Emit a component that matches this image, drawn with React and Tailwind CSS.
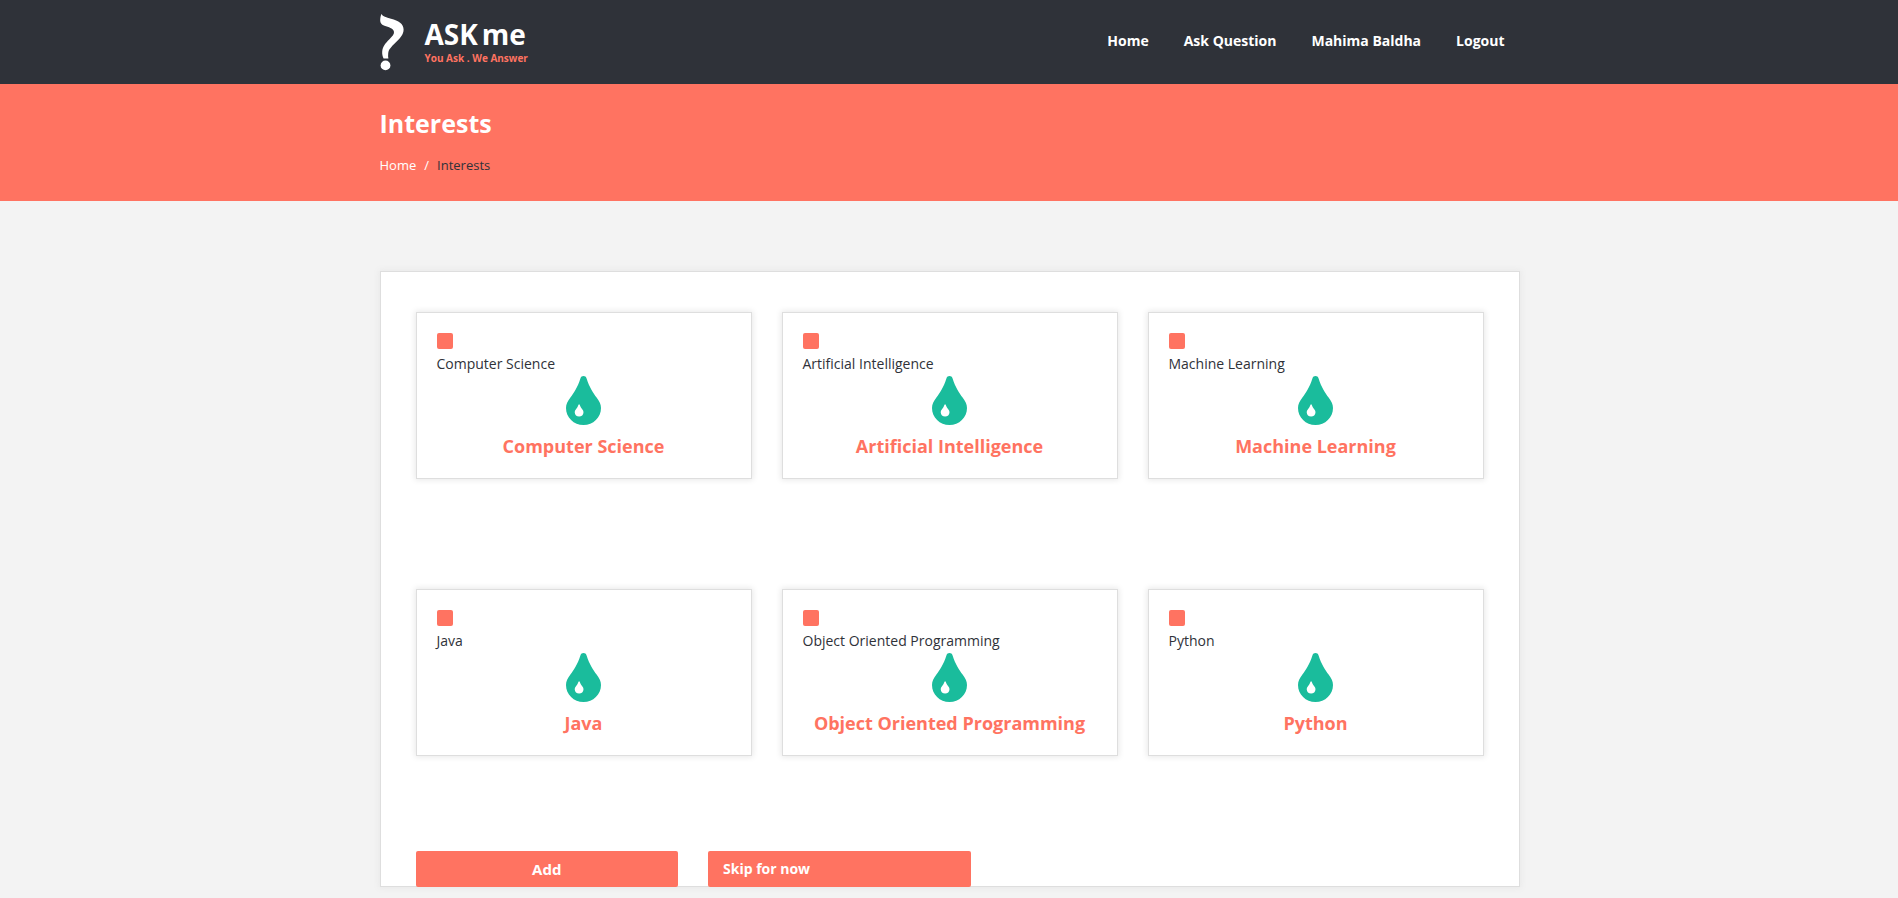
const interests = [
  "Computer Science",
  "Artificial Intelligence",
  "Machine Learning",
  "Java",
  "Object Oriented Programming",
  "Python",
];

const navItems = ["Home", "Ask Question", "Mahima Baldha", "Logout"];

function QuestionMark() {
  return (
    <svg width="24" height="58" viewBox="0 0 24 58" fill="#fff" aria-hidden="true">
      <path d="M1.4 1 C3 3.6 6 4.4 11 5.8 C18.6 8 23.6 10.8 23.6 16.4 C23.6 21.6 19.6 25.6 15.4 29.8 C11.2 34 8.6 36.4 8.2 40.4 C8 42.4 8 44 8.4 45.6 L3.6 45.6 C2.6 43.4 2 41 2.2 38.4 C2.6 33.4 5.6 30 9.2 26.4 C12.2 23.4 14.2 21.4 14 19 C13.8 16 10.4 14.6 6 13.2 C1.8 11.8 .4 10.4 .2 7.4 C.2 5 .6 2.8 1.4 1 Z" />
      <circle cx="5.5" cy="52.4" r="4.9" />
    </svg>
  );
}

function Droplet() {
  return (
    <svg className="mx-auto block" width="35" height="49" viewBox="0 0 35 49" aria-hidden="true">
      <path
        fill="#1abc9c"
        d="M17.5 0 C19 0 20 .8 20.6 2.4 C23.4 11.4 27.4 17 30.6 21.6 C33.4 25.4 35 28.2 35 32 C35 41.6 27.2 49 17.5 49 C7.8 49 0 41.6 0 32 C0 28.2 1.6 25.4 4.4 21.6 C7.6 17 11.6 11.4 14.4 2.4 C15 .8 16 0 17.5 0 Z"
      />
      <path
        fill="#fff"
        d="M13.1 28.2 C13.4 28.2 13.6 28.5 13.8 29 C14.4 31 15.4 32.2 16.4 33.6 C17.1 34.6 17.5 35.3 17.5 36.2 C17.5 38.7 15.5 40.6 13.1 40.6 C10.7 40.6 8.7 38.7 8.7 36.2 C8.7 35.3 9.1 34.6 9.8 33.6 C10.8 32.2 11.8 31 12.4 29 C12.6 28.5 12.8 28.2 13.1 28.2 Z"
      />
    </svg>
  );
}

function InterestCard({ name }) {
  return (
    <div className="border border-[#dedede] bg-white px-5 pt-5 pb-[19px] shadow-[0_0_6px_1px_#e8e8e8]">
      <label className="block text-sm leading-6 text-[#2f3239]">
        <input
          type="checkbox"
          className="mb-[3px] block size-4 appearance-none rounded-xs bg-[#ff7361]"
        />
        {name}
      </label>
      <Droplet />
      <h2 className="mt-2 text-center text-lg leading-[26px] font-bold text-[#ff7361]">
        {name}
      </h2>
    </div>
  );
}

export default function App() {
  return (
    <div className="min-h-screen bg-[#f3f3f3] font-['Open_Sans',sans-serif]">
      <header className="bg-[#2f3239] pl-px">
        <div className="mx-auto flex h-[84px] max-w-[1140px] justify-between">
          <a href="#" className="flex items-start gap-[21px] pt-[13px] text-white">
            <QuestionMark />
            <span className="block pt-1">
              <span className="flex gap-1 text-[28px] leading-[34px] font-bold">
                <span>ASK</span>
                <span>me</span>
              </span>
              <span className="block text-[10px] leading-[14px] font-bold text-[#ff7361]">
                You Ask . We Answer
              </span>
            </span>
          </a>
          <nav className="flex gap-[35px] pt-[31px] pr-[15px]">
            {navItems.map((item) => (
              <a key={item} href="#" className="text-sm leading-5 font-bold text-white">
                {item}
              </a>
            ))}
          </nav>
        </div>
      </header>

      <section className="bg-[#ff7361] pl-px">
        <div className="mx-auto h-[117px] max-w-[1140px] pt-[23px]">
          <h1 className="text-[25px] leading-8 font-bold text-white">Interests</h1>
          <nav aria-label="Breadcrumb" className="mt-4 flex gap-2 text-[13px] leading-5 text-white">
            <a href="#">Home</a>
            <span>/</span>
            <span className="text-[#2f3239]">Interests</span>
          </nav>
        </div>
      </section>

      <main className="pt-[70px] pb-[11px] pl-px">
        <form className="mx-auto max-w-[1140px] border border-[#dedede] bg-white px-[35px] pt-10 shadow-[0_0_6px_1px_#e8e8e8]">
          <div className="grid grid-cols-3 gap-x-[30px] gap-y-[110px]">
            {interests.map((name) => (
              <InterestCard key={name} name={name} />
            ))}
          </div>
          <div className="mt-[95px] -mb-px grid max-w-[555px] grid-cols-2 gap-x-[30px]">
            <button
              type="button"
              className="h-9 rounded-xs bg-[#ff7361] text-center text-[15px] font-bold text-white"
            >
              Add
            </button>
            <a
              href="#"
              className="flex h-9 items-center rounded-xs bg-[#ff7361] px-[15px] text-sm font-bold text-white"
            >
              Skip for now
            </a>
          </div>
        </form>
      </main>
    </div>
  );
}
